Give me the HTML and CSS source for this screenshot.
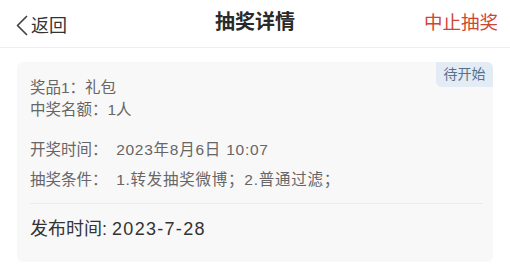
FILE: index.html
```html
<!DOCTYPE html>
<html lang="zh">
<head>
<meta charset="utf-8">
<link rel="stylesheet" href="styles.css">
</head>
<body>
<div class="header">
  <div class="back">
    <svg class="chev" width="13" height="21" viewBox="0 0 13 21"><path d="M11.5 1.5 L2.5 10.5 L11.5 19.5" fill="none" stroke="#444" stroke-width="1.7" stroke-linecap="round" stroke-linejoin="round"/></svg>
    <span class="back-text">返回</span>
  </div>
  <div class="title">抽奖详情</div>
  <div class="stop">中止抽奖</div>
</div>
<div class="card">
  <div class="badge">待开始</div>
  <div class="prize">
    <div>奖品1：礼包</div>
    <div>中奖名额：1人</div>
  </div>
  <div class="info">
    <div>开奖时间：&nbsp; <span class="value">2023年8月6日 10:07</span></div>
    <div>抽奖条件：&nbsp; <span class="value">1.转发抽奖微博；2.普通过滤；</span></div>
  </div>
  <div class="divider"></div>
  <div class="publish">发布时间: <span class="date">2023-7-28</span></div>
</div>
</body>
</html>
```
FILE: styles.css
```css
body {
  margin: 0;
  background: #fff;
  font-family: "Liberation Sans", "Noto Sans CJK SC", sans-serif;
}
.header {
  position: relative;
  height: 47px;
  border-bottom: 1px solid #eeeeee;
  display: flex;
  align-items: center;
  justify-content: space-between;
  padding: 0 12px 0 15px;
}
.back {
  display: flex;
  align-items: center;
  margin-top: 4px;
}
.chev {
  display: block;
  margin-right: 3px;
}
.back-text {
  font-size: 18px;
  color: #333;
  line-height: 22px;
}
.title {
  position: absolute;
  left: 0;
  right: 0;
  top: 0;
  text-align: center;
  line-height: 45px;
  font-size: 20px;
  font-weight: 700;
  color: #2a2a2a;
  pointer-events: none;
}
.stop {
  font-size: 18.5px;
  color: #cf4533;
  line-height: 45px;
  margin-bottom: 2px;
}
.card {
  position: relative;
  margin: 14px 17px 0;
  height: 200px;
  box-sizing: border-box;
  padding: 15px 10px 0 13px;
  background: #f8f8f8;
  border-radius: 6px;
  color: #666;
  font-size: 15.5px;
}
.badge {
  position: absolute;
  top: 0;
  right: 0;
  width: 57px;
  height: 25px;
  line-height: 25px;
  text-align: center;
  font-size: 14px;
  color: #56718d;
  background: #e3ebf5;
  border-radius: 0 6px 0 6px;
}
.prize {
  line-height: 22px;
}
.info {
  margin-top: 14px;
  line-height: 30px;
}
.value {
  letter-spacing: 0.75px;
}
.divider {
  margin-top: 8px;
  height: 1px;
  background: #ebebeb;
}
.publish {
  line-height: 50px;
  font-size: 18px;
  color: #333;
}
.date {
  letter-spacing: 1.3px;
}
```
